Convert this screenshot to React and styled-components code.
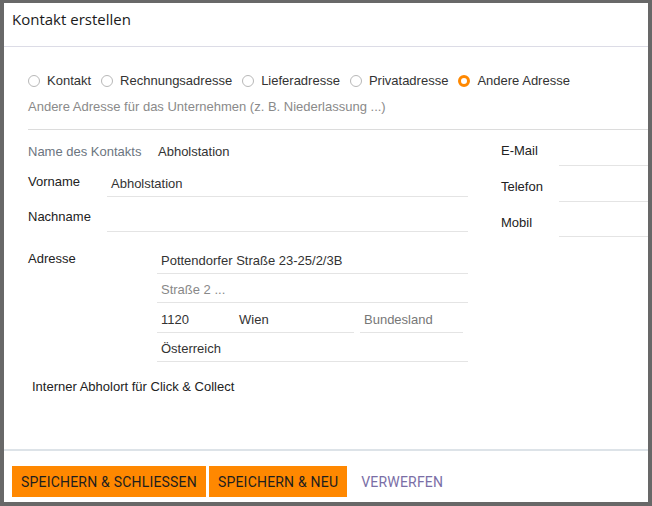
import React from "react";
import styled, { createGlobalStyle } from "styled-components";

const Global = createGlobalStyle`
  html, body { margin: 0; padding: 0; background: #686868; }
  body { font-family: "Liberation Sans", Arial, sans-serif; font-size: 13px; color: #222; }
  * { box-sizing: border-box; }
`;

const Panel = styled.div`
  margin: 3px 4px 4px 4px;
  height: 499px;
  background: #fff;
  display: flex;
  flex-direction: column;
`;

const Header = styled.div`
  height: 44px;
  padding: 0 8px;
  display: flex;
  align-items: center;
  border-bottom: 1px solid #dcdce6;
  flex: none;
`;

const Title = styled.h1`
  margin: 0 0 12px 0;
  font-family: "Open Sans", "Segoe UI", sans-serif;
  font-size: 15px;
  font-weight: 500;
  color: #1a1a1a;
`;

const Body = styled.div`
  flex: 1;
  padding: 26px 0 0 24px;
`;

const RadioRow = styled.div`
  display: flex;
  align-items: center;
  height: 16px;
`;

const RadioItem = styled.label`
  display: flex;
  align-items: center;
  margin-right: 10px;
  color: #333;
  line-height: 16px;
`;

const RadioCircle = styled.span`
  width: 12px;
  height: 12px;
  border-radius: 50%;
  margin-right: 7px;
  border: ${(p) => (p.$checked ? "3px solid #ff8800" : "1px solid #b8b8b8")};
  background: #fff;
  flex: none;
`;

const Hint = styled.div`
  margin-top: 10px;
  color: #8a8a8a;
  line-height: 16px;
`;

const Divider = styled.div`
  margin-top: 14px;
  border-top: 1px solid #dcdcdc;
`;

const FormGrid = styled.div`
  display: grid;
  grid-template-columns: 440px 1fr;
  column-gap: 33px;
`;

const LeftCol = styled.div`
  display: flex;
  flex-direction: column;
`;

const RightCol = styled.div`
  display: flex;
  flex-direction: column;
`;

const NameRow = styled.div`
  display: flex;
  margin-top: 14px;
  line-height: 16px;
`;

const NameLabel = styled.span`
  width: 130px;
  color: #6c7580;
`;

const NameValue = styled.span`
  color: #333;
`;

const FieldRow = styled.div`
  display: flex;
  align-items: center;
  margin-top: ${(p) => p.$mt || 0}px;
`;

const Label = styled.span`
  width: ${(p) => p.$w}px;
  color: #222;
  flex: none;
  line-height: 16px;
`;

const Input = styled.div`
  flex: 1;
  height: 30px;
  display: flex;
  align-items: center;
  padding: 4px 0 0 4px;
  border-bottom: 1px solid #e4e4e4;
  color: ${(p) => (p.$placeholder ? "#888" : "#333")};
`;

const AddressBlock = styled.div`
  display: flex;
  margin-top: 12px;
`;

const AddressLabel = styled.span`
  width: 129px;
  flex: none;
  line-height: 16px;
  padding-top: 7px;
  color: #222;
`;

const AddressFields = styled.div`
  flex: 1;
  display: flex;
  flex-direction: column;
`;

const AddrLine = styled.div`
  height: ${(p) => p.$h || 29}px;
  display: flex;
  align-items: center;
  padding: 3px 0 0 4px;
  border-bottom: 1px solid #e4e4e4;
  color: ${(p) => (p.$placeholder ? "#888" : "#333")};
`;

const CityRow = styled.div`
  display: flex;
  gap: 6px;
  padding-right: 5px;
`;

const CityGroup = styled.div`
  width: 197px;
  height: 30px;
  display: flex;
  align-items: center;
  padding-top: 3px;
  border-bottom: 1px solid #e4e4e4;
  color: #333;
`;

const Zip = styled.span`
  width: 82px;
  padding-left: 4px;
`;

const StateField = styled.div`
  flex: 1;
  height: 30px;
  display: flex;
  align-items: center;
  padding: 3px 0 0 4px;
  border-bottom: 1px solid #e4e4e4;
  color: #777;
`;

const Note = styled.div`
  margin: 17px 0 0 4px;
  line-height: 16px;
  color: #222;
`;

const ContactRow = styled.div`
  display: flex;
  height: ${(p) => p.$h || 36}px;
`;

const ContactLabel = styled.span`
  width: 58px;
  flex: none;
  padding-top: 13px;
  line-height: 16px;
  color: #222;
`;

const ContactInput = styled.div`
  flex: 1;
  border-bottom: 1px solid #e4e4e4;
`;

const Footer = styled.div`
  flex: none;
  height: 53px;
  border-top: 2px solid #dde3e8;
  padding: 15px 8px 0 8px;
  display: flex;
  align-items: flex-start;
  gap: 3px;
`;

const Button = styled.button`
  height: 31px;
  padding: 0 9px;
  border: none;
  border-radius: 0;
  font-family: Roboto, "Liberation Sans", sans-serif;
  font-size: 14px;
  letter-spacing: 0.2px;
  text-transform: uppercase;
  background: ${(p) => (p.$primary ? "#ff8800" : "transparent")};
  color: ${(p) => (p.$primary ? "#1e1e1e" : "#7a6ea6")};
  cursor: pointer;
  margin-left: ${(p) => p.$ml || 0}px;
`;

const radios = [
  { label: "Kontakt" },
  { label: "Rechnungsadresse" },
  { label: "Lieferadresse" },
  { label: "Privatadresse" },
  { label: "Andere Adresse", checked: true },
];

export default function App() {
  return (
    <>
      <Global />
      <Panel>
        <Header>
          <Title>Kontakt erstellen</Title>
        </Header>
        <Body>
          <RadioRow>
            {radios.map((r) => (
              <RadioItem key={r.label}>
                <RadioCircle $checked={r.checked} />
                {r.label}
              </RadioItem>
            ))}
          </RadioRow>
          <Hint>Andere Adresse für das Unternehmen (z. B. Niederlassung ...)</Hint>
          <Divider />
          <FormGrid>
            <LeftCol>
              <NameRow>
                <NameLabel>Name des Kontakts</NameLabel>
                <NameValue>Abholstation</NameValue>
              </NameRow>
              <FieldRow $mt={7}>
                <Label $w={79}>Vorname</Label>
                <Input>Abholstation</Input>
              </FieldRow>
              <FieldRow $mt={5}>
                <Label $w={79}>Nachname</Label>
                <Input />
              </FieldRow>
              <AddressBlock>
                <AddressLabel>Adresse</AddressLabel>
                <AddressFields>
                  <AddrLine $h={30}>Pottendorfer Straße 23-25/2/3B</AddrLine>
                  <AddrLine $placeholder>Straße 2 ...</AddrLine>
                  <CityRow>
                    <CityGroup>
                      <Zip>1120</Zip>
                      <span>Wien</span>
                    </CityGroup>
                    <StateField>Bundesland</StateField>
                  </CityRow>
                  <AddrLine>Österreich</AddrLine>
                </AddressFields>
              </AddressBlock>
              <Note>Interner Abholort für Click &amp; Collect</Note>
            </LeftCol>
            <RightCol>
              <ContactRow>
                <ContactLabel>E-Mail</ContactLabel>
                <ContactInput />
              </ContactRow>
              <ContactRow>
                <ContactLabel>Telefon</ContactLabel>
                <ContactInput />
              </ContactRow>
              <ContactRow $h={35}>
                <ContactLabel>Mobil</ContactLabel>
                <ContactInput />
              </ContactRow>
            </RightCol>
          </FormGrid>
        </Body>
        <Footer>
          <Button $primary>Speichern &amp; Schliessen</Button>
          <Button $primary>Speichern &amp; Neu</Button>
          <Button $ml={2}>Verwerfen</Button>
        </Footer>
      </Panel>
    </>
  );
}
